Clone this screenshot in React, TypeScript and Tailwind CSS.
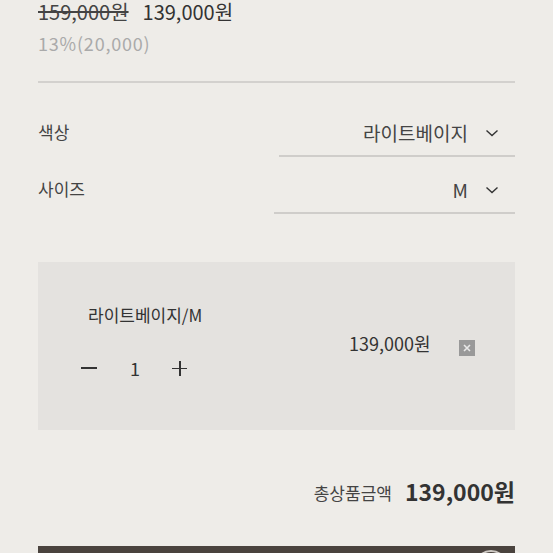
import React from "react";

const Chevron = () => (
  <svg width="14" height="8" viewBox="0 0 14 8" fill="none" className="block">
    <path d="M1.5 1.5 L7 6.5 L12.5 1.5" stroke="#333" strokeWidth="1.4" />
  </svg>
);

export default function App() {
  return (
    <div
      className="w-[553px] h-[553px] overflow-hidden bg-[#eeece8] text-[#333] relative"
      style={{ fontFamily: '"Noto Sans CJK KR", "Noto Sans", sans-serif' }}
    >
      <div className="px-[38px]">
        <div className="h-[24px] flex items-center gap-[14px] text-[20px] leading-[24px]">
          <span className="line-through text-[#444]">159,000원</span>
          <span className="text-[#333]">139,000원</span>
        </div>
        <div className="mt-[7px] h-[24px] flex items-center text-[18px] leading-[24px] text-[#aaa] tracking-[0.8px]">13%(20,000)</div>
        <div className="mt-[26px] h-[2px] bg-[#d3d1ce]" />

        <div className="mt-[36px] flex items-start justify-between">
          <span className="h-[26px] flex items-center text-[17px] text-[#444]">색상</span>
          <div className="w-[236px] h-[38px] border-b-2 border-[#cfcdca] flex items-center justify-end pr-[16px] gap-[17px] pb-[8px]">
            <span className="text-[19px] text-[#444]">라이트베이지</span>
            <Chevron />
          </div>
        </div>

        <div className="mt-[19px] flex items-start justify-between">
          <span className="h-[26px] flex items-center text-[17px] text-[#444]">사이즈</span>
          <div className="w-[241px] h-[38px] border-b-2 border-[#cfcdca] flex items-center justify-end pr-[16px] gap-[17px] pb-[8px]">
            <span className="text-[19px] text-[#444]">M</span>
            <Chevron />
          </div>
        </div>

        <div className="mt-[48px] h-[168px] bg-[#e4e2df] relative">
          <div className="absolute left-[50px] top-[40px] text-[17px] text-[#333]">라이트베이지/M</div>
          <div className="absolute left-[43px] top-[95px] h-[22px] flex items-center">
            <span className="w-[16px] h-[1.5px] bg-[#333] block" />
            <span className="ml-[33px] text-[18px] text-[#333]">1</span>
            <span className="ml-[32px] relative w-[15px] h-[15px] block">
              <span className="absolute left-0 top-[7px] w-[15px] h-[1.5px] bg-[#333]" />
              <span className="absolute left-[7px] top-0 w-[1.5px] h-[15px] bg-[#333]" />
            </span>
          </div>
          <div className="absolute left-[311px] top-[68px] text-[18px] text-[#333]">139,000원</div>
          <div className="absolute left-[421px] top-[78px] w-[16px] h-[16px] bg-[#999] flex items-center justify-center">
            <svg width="8" height="8" viewBox="0 0 8 8">
              <path d="M1 1 L7 7 M7 1 L1 7" stroke="#e8e8e8" strokeWidth="1.6" />
            </svg>
          </div>
        </div>

        <div className="mt-[46px] h-[30px] flex items-center justify-end gap-[13px]">
          <span className="text-[17px] text-[#444] mt-[4px]">총상품금액</span>
          <span className="text-[23px] font-bold text-[#333]">139,000원</span>
        </div>

        <div className="mt-[40px] h-[20px] bg-[#4a433e] relative">
          <div className="absolute left-[436px] top-[4px] w-[34px] h-[34px] rounded-full border-2 border-[#cfcac5]" />
        </div>
      </div>
    </div>
  );
}
